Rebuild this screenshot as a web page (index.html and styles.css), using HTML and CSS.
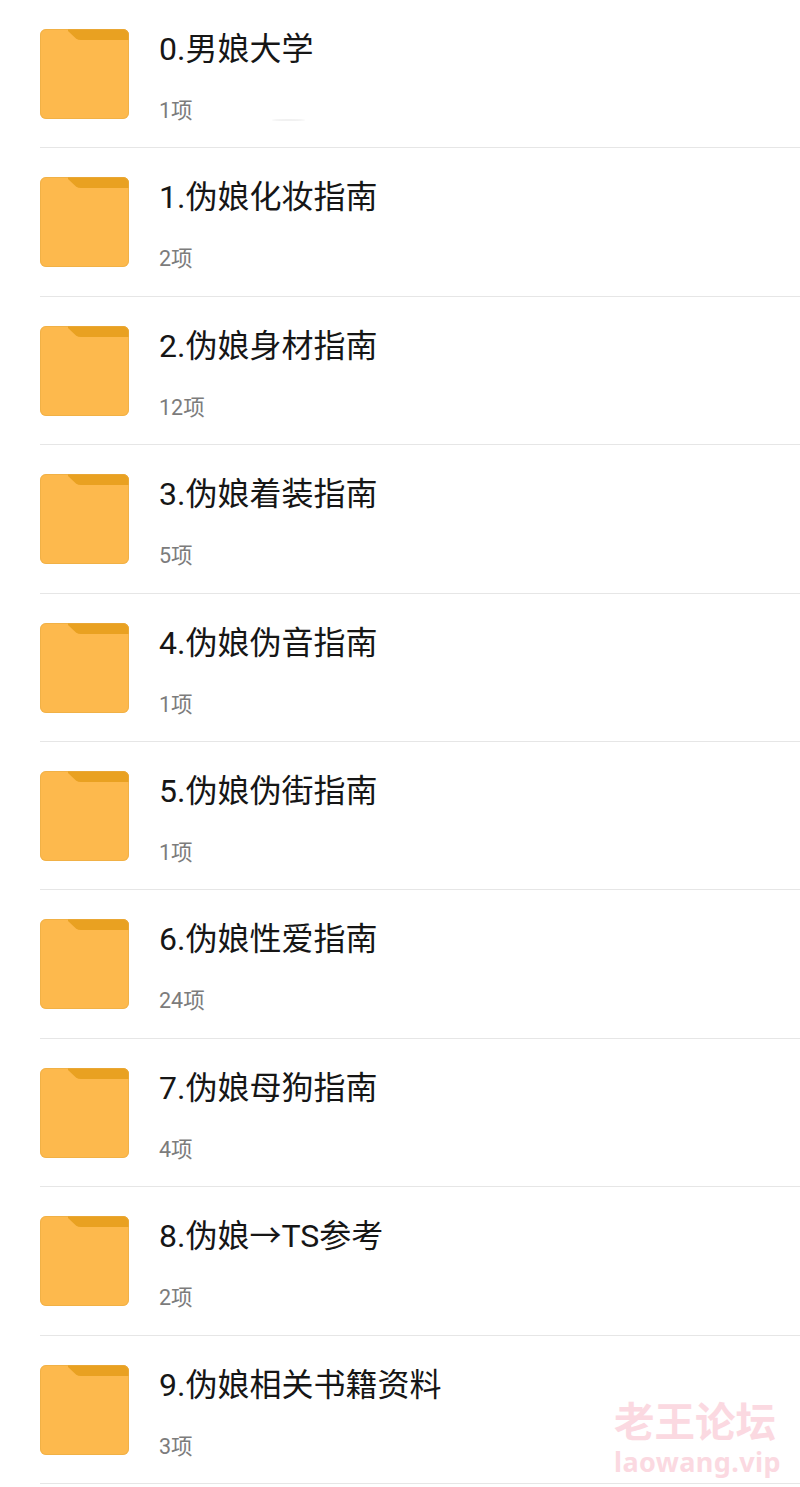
FILE: index.html
```html
<!DOCTYPE html>
<html>

<head>
    <meta charset="UTF-8">
    <meta name="viewport" content="width=device-width, initial-scale=1">
    <title>文件夹</title>
    <link rel="stylesheet" href="styles.css">
</head>
<body>
    <svg width="0" height="0" class="defs">
        <symbol id="folder" viewBox="0 0 89 90">
            <rect width="89" height="90" rx="6" fill="#fdb94d"/>
            <path d="M28 0H83a6 6 0 0 1 6 6V11H41Q38 11 36 9.500L28 2Z" fill="#e9a121"/>
            <rect x=".5" y=".5" width="88" height="89" rx="5.500" fill="none" stroke="#e9ab43" stroke-opacity=".6"/>
        </symbol>
    </svg>
    <div class="list">
        <div class="row">
            <svg class="folder"><use href="#folder"/></svg>
            <div class="info"><div class="name">0.男娘大学</div><div class="count">1项</div></div>
        </div>
        <div class="row">
            <svg class="folder"><use href="#folder"/></svg>
            <div class="info"><div class="name">1.伪娘化妆指南</div><div class="count">2项</div></div>
        </div>
        <div class="row">
            <svg class="folder"><use href="#folder"/></svg>
            <div class="info"><div class="name">2.伪娘身材指南</div><div class="count">12项</div></div>
        </div>
        <div class="row">
            <svg class="folder"><use href="#folder"/></svg>
            <div class="info"><div class="name">3.伪娘着装指南</div><div class="count">5项</div></div>
        </div>
        <div class="row">
            <svg class="folder"><use href="#folder"/></svg>
            <div class="info"><div class="name">4.伪娘伪音指南</div><div class="count">1项</div></div>
        </div>
        <div class="row">
            <svg class="folder"><use href="#folder"/></svg>
            <div class="info"><div class="name">5.伪娘伪街指南</div><div class="count">1项</div></div>
        </div>
        <div class="row">
            <svg class="folder"><use href="#folder"/></svg>
            <div class="info"><div class="name">6.伪娘性爱指南</div><div class="count">24项</div></div>
        </div>
        <div class="row">
            <svg class="folder"><use href="#folder"/></svg>
            <div class="info"><div class="name">7.伪娘母狗指南</div><div class="count">4项</div></div>
        </div>
        <div class="row">
            <svg class="folder"><use href="#folder"/></svg>
            <div class="info"><div class="name">8.伪娘→TS参考</div><div class="count">2项</div></div>
        </div>
        <div class="row">
            <svg class="folder"><use href="#folder"/></svg>
            <div class="info"><div class="name">9.伪娘相关书籍资料</div><div class="count">3项</div></div>
        </div>
    </div>
    <div class="smudge"></div>
    <div class="mark">
        <div class="mark-cn">老王论坛</div>
        <div class="mark-en">laowang.vip</div>
    </div>
</body>

</html>
```

FILE: styles.css
```css
*{
    box-sizing:border-box;
}
html,body{
    height:100%;
}
body{
    margin:0;
    position:relative;
    overflow:hidden;
    background:#fff;
    font-family:"Liberation Sans","Noto Sans CJK SC",sans-serif;
}
.defs{
    position:absolute;
}
.list{
    padding-left:40px;
}
.row{
    display:flex;
    gap:30px;
    height:148.4px;
    padding-top:29px;
    border-bottom:solid 1px #e6e6e6;
}
.folder{
    flex:none;
    width:89px;
    height:90px;
}
.info{
    flex:1;
}
.name{
    font-family:"Roboto","Noto Sans CJK SC",sans-serif;
    font-size:32px;
    line-height:40px;
    color:#161616;
}
.count{
    margin-top:28px;
    font-family:"Roboto","Noto Sans CJK SC",sans-serif;
    font-size:21.5px;
    line-height:28px;
    color:#7c7c7c;
}
.smudge{
    position:absolute;
    left:272px;
    top:119px;
    width:33px;
    height:2px;
    border-radius:50%;
    background:#f1f1f1;
}
.mark{
    position:absolute;
    left:614px;
    top:1398px;
    color:#fbd9e1;
    font-weight:700;
}
.mark-cn{
    font-family:"Noto Sans CJK SC",sans-serif;
    font-size:40.5px;
    line-height:44px;
}
.mark-en{
    font-family:"Noto Sans","Liberation Sans",sans-serif;
    font-size:27px;
    line-height:40px;
    letter-spacing:.4px;
}
```
